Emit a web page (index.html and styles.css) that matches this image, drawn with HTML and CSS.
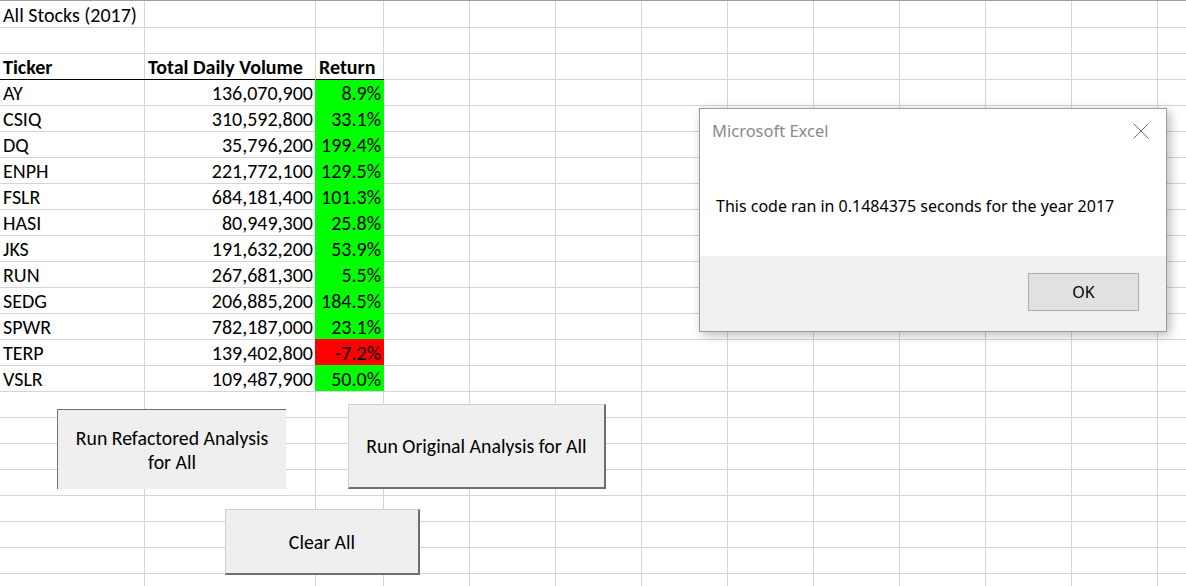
FILE: index.html
```html
<!DOCTYPE html>
<html lang="en">
<head>
<meta charset="utf-8">
<title>All Stocks (2017)</title>
<link rel="stylesheet" href="styles.css">
</head>
<body>
<div class="sheet">
  <div class="table">
    <div class="cell">All Stocks (2017)</div><div class="cell"></div><div class="cell"></div>
    <div class="cell"></div><div class="cell"></div><div class="cell"></div>
    <div class="cell head">Ticker</div><div class="cell head">Total Daily Volume</div><div class="cell head">Return</div>
    <div class="cell top">AY</div><div class="cell top num">136,070,900</div><div class="cell top num up">8.9%</div>
    <div class="cell">CSIQ</div><div class="cell num">310,592,800</div><div class="cell num up">33.1%</div>
    <div class="cell">DQ</div><div class="cell num">35,796,200</div><div class="cell num up">199.4%</div>
    <div class="cell">ENPH</div><div class="cell num">221,772,100</div><div class="cell num up">129.5%</div>
    <div class="cell">FSLR</div><div class="cell num">684,181,400</div><div class="cell num up">101.3%</div>
    <div class="cell">HASI</div><div class="cell num">80,949,300</div><div class="cell num up">25.8%</div>
    <div class="cell">JKS</div><div class="cell num">191,632,200</div><div class="cell num up">53.9%</div>
    <div class="cell">RUN</div><div class="cell num">267,681,300</div><div class="cell num up">5.5%</div>
    <div class="cell">SEDG</div><div class="cell num">206,885,200</div><div class="cell num up">184.5%</div>
    <div class="cell">SPWR</div><div class="cell num">782,187,000</div><div class="cell num up">23.1%</div>
    <div class="cell">TERP</div><div class="cell num">139,402,800</div><div class="cell num down">-7.2%</div>
    <div class="cell">VSLR</div><div class="cell num">109,487,900</div><div class="cell num up">50.0%</div>
  </div>

  <button class="xl-btn btn-refactor pressed" type="button">Run Refactored Analysis<br>for All</button>
  <button class="xl-btn btn-original" type="button">Run Original Analysis for All</button>
  <button class="xl-btn btn-clear" type="button">Clear All</button>

  <div class="dialog">
    <div class="dlg-head">
      <span class="dlg-title">Microsoft Excel</span>
      <svg class="dlg-close" width="16" height="16" viewBox="0 0 16 16"><path d="M0.5 0.5 L15.5 15.5 M15.5 0.5 L0.5 15.5" stroke="#6e6e6e" stroke-width="1" fill="none"/></svg>
    </div>
    <div class="dlg-body">This code ran in 0.1484375 seconds for the year 2017</div>
    <div class="dlg-foot"><button class="dlg-ok" type="button">OK</button></div>
  </div>
</div>
</body>
</html>
```
FILE: styles.css
```css
html, body {
  margin: 0;
  padding: 0;
  background: #fff;
  overflow: hidden;
}

.sheet {
  position: relative;
  width: 1186px;
  height: 585px;
  border-top: 1px solid #9e9e9e;
  overflow: hidden;
  font-family: Carlito, Calibri, Lato, sans-serif;
  color: #000;
  background-image:
    linear-gradient(to right, transparent 144px, #d4d4d4 144px 145px, transparent 145px 315px, #d4d4d4 315px 316px, transparent 316px 383px, #d4d4d4 383px 384px, transparent 384px),
    repeating-linear-gradient(to right, transparent 0 85px, #d4d4d4 85px 86px),
    repeating-linear-gradient(to bottom, transparent 0 25px, #d4d4d4 25px 26px);
  background-size: 100% 100%, calc(100% - 384px) 100%, 100% 100%;
  background-position: 0 0, 384px 0, 0 1px;
  background-repeat: no-repeat, no-repeat, repeat;
}

.table {
  display: grid;
  grid-template-columns: 145px 171px 68px;
  grid-auto-rows: 26px;
  width: 384px;
}

.cell {
  box-sizing: border-box;
  display: flex;
  align-items: flex-end;
  padding: 0 3px 1px 3px;
  font-size: 20px;
  line-height: 22px;
  white-space: nowrap;
}

.head {
  font-weight: 700;
}

.top {
  border-top: 1px solid #000;
}

.num {
  justify-content: flex-end;
}

.up {
  background: #00ff00;
  box-shadow: -1px 0 0 #00ff00;
}

.down {
  background: #ff0000;
  box-shadow: -1px 0 0 #ff0000;
}

/* sheet form buttons */
.xl-btn {
  position: absolute;
  box-sizing: border-box;
  margin: 0;
  padding: 0;
  background: #efefef;
  font-family: Carlito, Calibri, Lato, sans-serif;
  font-size: 19.8px;
  line-height: 24px;
  color: #000;
  text-align: center;
  border-style: solid;
  border-width: 1px 2px 2px 1px;
  border-color: #d0d0d0 #6f6f6f #6f6f6f #d0d0d0;
}

.pressed {
  border-width: 1px 0 0 1px;
  border-color: #6f6f6f;
}

.btn-refactor {
  left: 57px;
  top: 408px;
  width: 229px;
  height: 80px;
}

.btn-original {
  left: 348px;
  top: 403px;
  width: 258px;
  height: 85px;
}

.btn-clear {
  left: 225px;
  top: 508px;
  width: 195px;
  height: 66px;
}

/* message box */
.dialog {
  position: absolute;
  left: 699px;
  top: 107px;
  width: 468px;
  height: 224px;
  box-sizing: border-box;
  border: 1px solid #9b9b9b;
  background: #fff;
  box-shadow: 3px 3px 10px rgba(0, 0, 0, 0.28);
  display: flex;
  flex-direction: column;
  font-family: "Noto Sans", "Open Sans", sans-serif;
}

.dlg-head {
  height: 46px;
  box-sizing: border-box;
  display: flex;
  align-items: flex-start;
  justify-content: space-between;
  padding: 11px 17px 0 12px;
}

.dlg-title {
  font-size: 16.5px;
  line-height: 22px;
  color: #8a8a8a;
}

.dlg-close {
  display: block;
  margin-top: 3px;
}

.dlg-body {
  flex: 1;
  display: flex;
  align-items: center;
  padding-left: 16px;
  font-size: 16px;
  color: #000;
}

.dlg-foot {
  height: 75px;
  background: #f0f0f0;
  display: flex;
  justify-content: flex-end;
  align-items: flex-start;
  padding: 17px 27px 0 0;
  box-sizing: border-box;
}

.dlg-ok {
  width: 111px;
  height: 38px;
  margin: 0;
  padding: 0;
  background: #e1e1e1;
  border: 1px solid #adadad;
  font-family: "Noto Sans", "Open Sans", sans-serif;
  font-size: 16px;
  color: #000;
}
```
